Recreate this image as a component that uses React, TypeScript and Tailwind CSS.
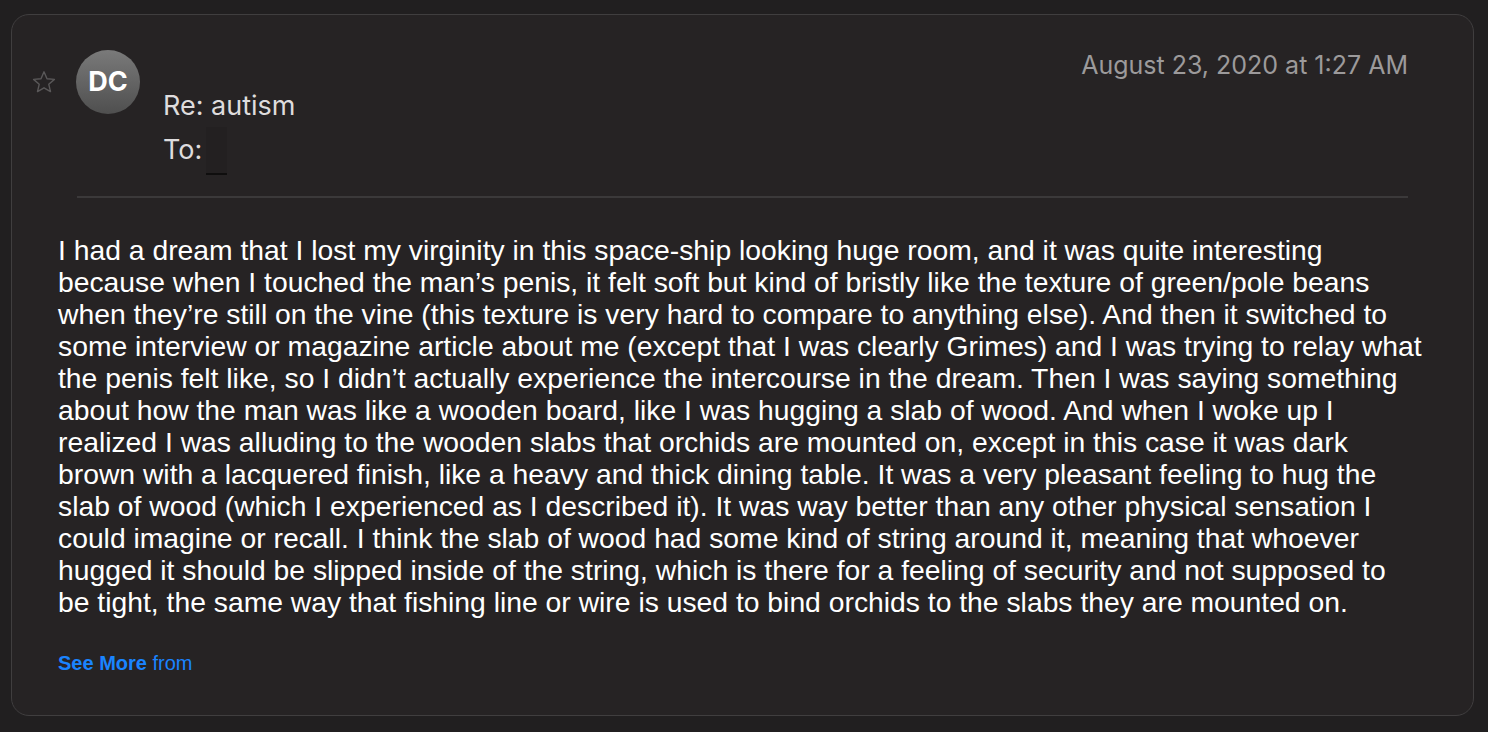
import React from "react";

const lines = [
  "I had a dream that I lost my virginity in this space-ship looking huge room, and it was quite interesting",
  "because when I touched the man\u2019s penis, it felt soft but kind of bristly like the texture of green/pole beans",
  "when they\u2019re still on the vine (this texture is very hard to compare to anything else). And then it switched to",
  "some interview or magazine article about me (except that I was clearly Grimes) and I was trying to relay what",
  "the penis felt like, so I didn\u2019t actually experience the intercourse in the dream. Then I was saying something",
  "about how the man was like a wooden board, like I was hugging a slab of wood. And when I woke up I",
  "realized I was alluding to the wooden slabs that orchids are mounted on, except in this case it was dark",
  "brown with a lacquered finish, like a heavy and thick dining table. It was a very pleasant feeling to hug the",
  "slab of wood (which I experienced as I described it). It was way better than any other physical sensation I",
  "could imagine or recall. I think the slab of wood had some kind of string around it, meaning that whoever",
  "hugged it should be slipped inside of the string, which is there for a feeling of security and not supposed to",
  "be tight, the same way that fishing line or wire is used to bind orchids to the slabs they are mounted on.",
];

export default function App() {
  return (
    <div className="w-[1488px] h-[732px] bg-[#211f20] pt-[14px] pl-[11px] overflow-hidden">
      <div className="w-[1463px] h-[702px] rounded-[18px] border border-[#403e3f] bg-[#262324] flex flex-col">
        <div className="flex justify-between">
          <div className="flex items-start">
            <svg
              className="ml-[20px] mt-[55px]"
              width="24"
              height="24"
              viewBox="0 0 24 24"
              fill="none"
              stroke="#5a5859"
              strokeWidth="1.4"
              strokeLinejoin="round"
            >
              <path d="M12 1.8l3 6.9 7.4.7-5.6 4.9 1.7 7.3L12 17.8l-6.5 3.8 1.7-7.3-5.6-4.9 7.4-.7z" />
            </svg>
            <div className="ml-[20px] mt-[35px] w-[64px] h-[64px] rounded-full bg-gradient-to-b from-[#7a7a7a] to-[#4f4f4f] flex items-center justify-center">
              <span
                className="text-white text-[27px] font-bold"
                style={{ fontFamily: "Inter, 'Liberation Sans', sans-serif" }}
              >
                DC
              </span>
            </div>
            <div
              className="ml-[23px] mt-[69px] text-[27px] text-[#dedcdd]"
              style={{ fontFamily: "Inter, 'Liberation Sans', sans-serif" }}
            >
              <div className="h-[44px] leading-[44px]">Re: autism</div>
              <div className="h-[44px] leading-[44px] flex items-start">
                <span>To:</span>
                <span className="ml-[4px] mt-[-1px] w-[21px] h-[48px] bg-[#232021] border-b-[2px] border-[#0f0e0e] inline-block" />
              </div>
            </div>
          </div>
          <div
            className="mt-[34px] mr-[65px] text-[25px] leading-[32px] text-[#9c9a9b]"
            style={{ fontFamily: "Inter, 'Liberation Sans', sans-serif" }}
          >
            August 23, 2020 at 1:27 AM
          </div>
        </div>
        <div className="ml-[65px] mr-[65px] mt-[24px] h-[2px] bg-[#3b393a]" />
        <div
          className="ml-[46px] mt-[36px] text-[28.3px] leading-[32px] text-white whitespace-nowrap"
          style={{ fontFamily: "'Liberation Sans', Arial, sans-serif" }}
        >
          {lines.map((l, i) => (
            <div key={i}>{l}</div>
          ))}
        </div>
        <div
          className="ml-[46px] mt-[33px] text-[20px] leading-[24px] text-[#1a84ff]"
          style={{ fontFamily: "'Liberation Sans', Arial, sans-serif" }}
        >
          <span className="font-bold">See More</span> from
        </div>
      </div>
    </div>
  );
}
